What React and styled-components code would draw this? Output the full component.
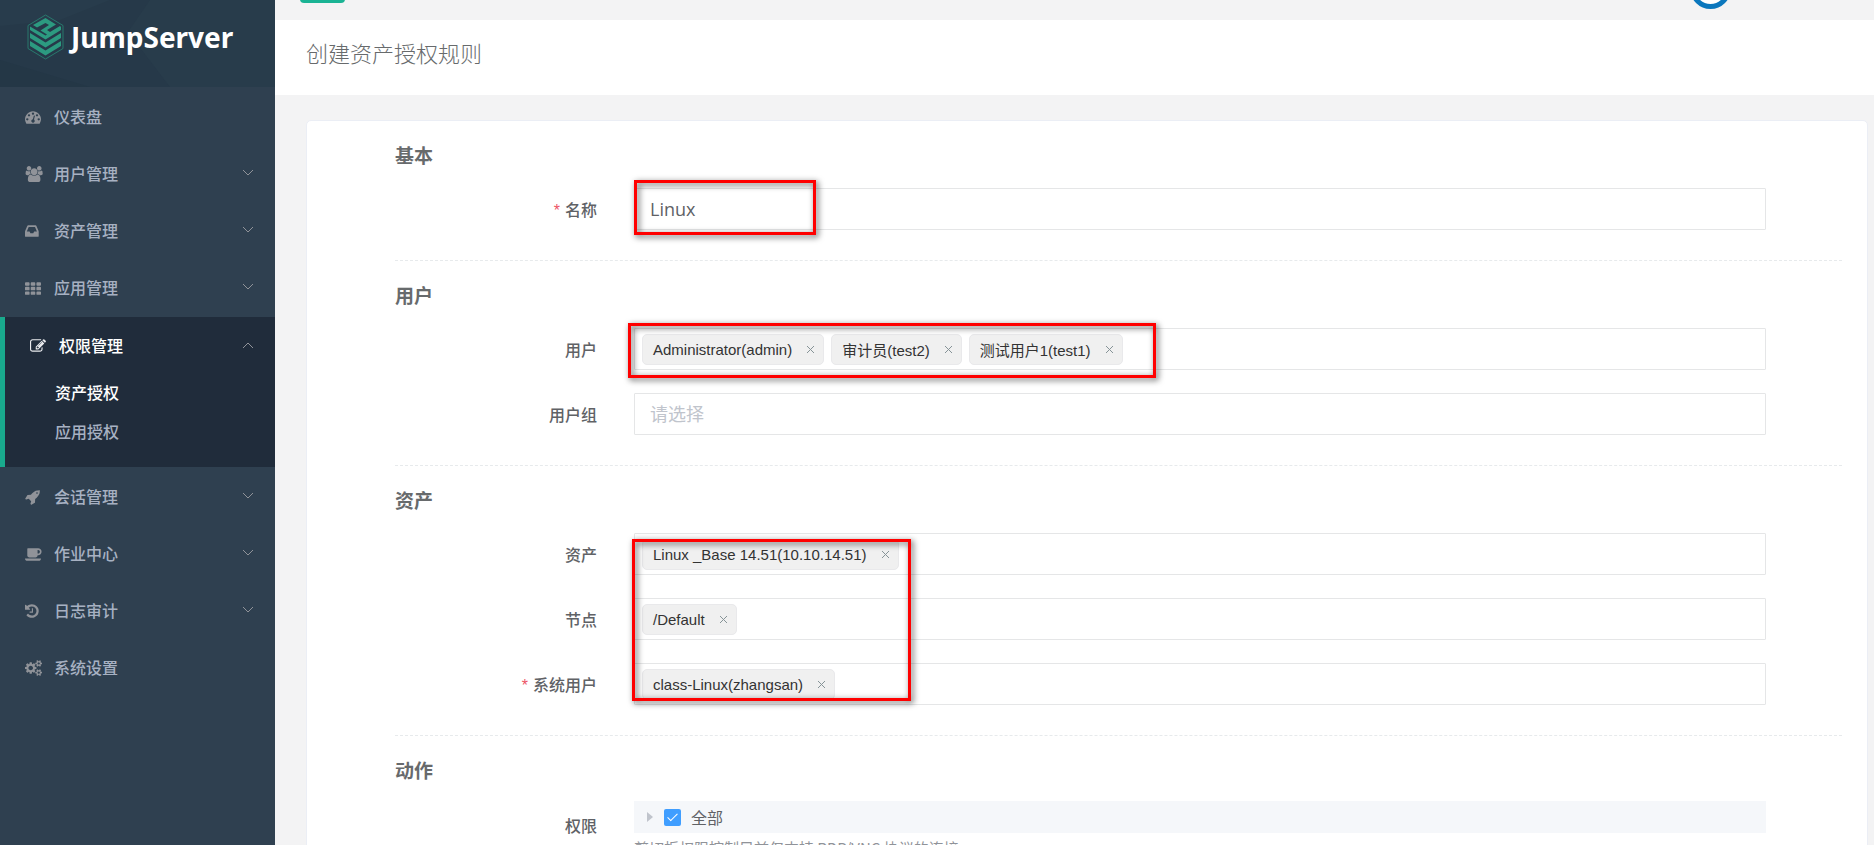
import React from "react";
import styled, { createGlobalStyle, css } from "styled-components";

const Global = createGlobalStyle`
  *, *::before, *::after { box-sizing: border-box; }
  body {
    margin: 0;
    overflow: hidden;
    background: #f3f3f4;
    color: #676a6c;
    font-family: "Open Sans", "Noto Sans CJK SC", sans-serif;
    font-size: 16px;
  }
  button, input { font: inherit; }
`;

const Layout = styled.div`
  display: grid;
  grid-template-columns: 275px minmax(0, 1fr);
  height: 100vh;
`;

const Sidebar = styled.aside`
  background: #2f4050;
  overflow: hidden;
`;

const Brand = styled.a`
  position: relative;
  display: flex;
  align-items: flex-start;
  gap: 7px;
  height: 87px;
  padding: 14px 0 0 27px;
  background: #263949;
  color: #fff;
  text-decoration: none;
`;

const BrandFacets = styled.svg`
  position: absolute;
  inset: 0;
  width: 100%;
  height: 100%;
`;

const BrandMark = styled.svg`
  position: relative;
  width: 37px;
  height: 46px;
`;

const BrandName = styled.span`
  position: relative;
  font-family: "Noto Sans", sans-serif;
  font-weight: 700;
  font-size: 28px;
  line-height: 46px;
`;

const MenuGroup = styled.ul`
  margin: 0;
  padding: 1px 0;
  list-style: none;
`;

const ActiveGroup = styled.div`
  padding-bottom: 15px;
  border-left: 5px solid #19aa8d;
  background: #202c3b;
`;

const MenuButton = styled.button`
  display: flex;
  align-items: center;
  width: 100%;
  height: 57px;
  padding: 0 21px 2px 25px;
  border: 0;
  background: none;
  color: ${(p) => (p.$active ? "#fff" : "#a7b1c2")};
  font-weight: 500;
  text-align: left;
`;

const MenuIcon = styled.svg`
  height: 16px;
  fill: ${(p) => (p.$active ? "#e9ebee" : "#909399")};
`;

const IconSlot = styled.span`
  display: flex;
  width: 29px;
  padding-top: 3px;
`;

const MenuText = styled.span`
  flex: 1;
`;

const Chevron = styled.svg`
  width: 12px;
  height: 8px;
  fill: none;
  stroke: #909399;
  ${(p) => p.$open && css`transform: rotate(180deg);`}
`;

const SubMenu = styled.ul`
  margin: 0;
  padding: 0;
  list-style: none;
`;

const SubLink = styled.a`
  display: block;
  padding-left: 50px;
  line-height: 39px;
  color: ${(p) => (p.$active ? "#fff" : "#a7b1c2")};
  font-weight: 500;
  text-decoration: none;
`;

const Main = styled.main`
  min-width: 0;
  overflow: hidden;
`;

const TopBar = styled.header`
  display: flex;
  align-items: flex-end;
  justify-content: space-between;
  height: 20px;
  padding: 0 143px 0 25px;
  overflow: hidden;
`;

const ToggleButton = styled.button`
  flex: none;
  width: 45px;
  height: 36px;
  margin-bottom: 17px;
  border: 0;
  border-radius: 4px;
  background: #1ab394;
`;

const Avatar = styled.span`
  flex: none;
  width: 41px;
  height: 41px;
  margin-bottom: 11px;
  border: 5px solid #0b77bd;
  border-radius: 50%;
  background: #fff;
`;

const PageTitle = styled.h1`
  margin: 0;
  padding-left: 31px;
  background: #fff;
  color: #676a6c;
  font-weight: 300;
  font-size: 22px;
  line-height: 66px;
  height: 75px;
`;

const Content = styled.div`
  padding: 25px 6px 0 31px;
`;

const Card = styled.form`
  padding: 0 25px 40px 88px;
  border: 1px solid #ebeef5;
  border-radius: 5px;
  background: #fff;
`;

const Section = styled.section`
  padding: 20px 0 30px;
  & + & { border-top: 1px dashed #e7eaec; }
`;

const SectionTitle = styled.h3`
  margin: 0 0 ${(p) => (p.$tight ? 15 : 17)}px;
  font-size: 19px;
  font-weight: 700;
  line-height: 30px;
`;

const Fields = styled.div`
  display: grid;
  gap: 23px;
  padding-right: 76px;
`;

const Field = styled.div`
  display: grid;
  grid-template-columns: 202px minmax(0, 1fr);
  column-gap: 37px;
`;

const Label = styled.label`
  line-height: 44px;
  height: ${(p) => (p.$tall ? 50 : 42)}px;
  padding-top: ${(p) => (p.$tall ? 3 : 0)}px;
  color: #606266;
  font-weight: 500;
  text-align: right;
  ${(p) => p.$required && css`
    &::before {
      content: "*";
      margin-right: 5px;
      color: #ed5565;
      font-family: "Liberation Sans", sans-serif;
      font-weight: 400;
    }
  `}
`;

const Control = styled.div`
  position: relative;
`;

const TextInput = styled.input`
  display: block;
  width: 100%;
  height: 42px;
  padding: 0 15px;
  border: 1px solid #e5e6e7;
  border-radius: 1px;
  background: #fff;
  color: #606266;
  font-size: 18px;
  &::placeholder { color: #c0c4cc; opacity: 1; }
`;

const TagBox = styled.div`
  display: flex;
  align-items: center;
  gap: 7px;
  height: 42px;
  padding: 0 7px;
  border: 1px solid #e5e6e7;
  border-radius: 1px;
`;

const TagSearch = styled.input`
  flex: 1;
  min-width: 0;
  height: 30px;
  border: 0;
  outline: 0;
`;

const Tag = styled.span`
  display: flex;
  align-items: center;
  height: 31px;
  padding: 0 7px 0 10px;
  border: 1px solid #e9e9eb;
  border-radius: 5px;
  background: #f0f0f0;
  color: #333;
  font-family: "Liberation Sans", "Noto Sans CJK SC", sans-serif;
  font-size: 15px;
  white-space: nowrap;
`;

const TagClose = styled.button`
  display: flex;
  margin-left: 13px;
  padding: 1px;
  border: 0;
  background: none;
  svg { width: 9px; height: 9px; stroke: #869397; }
`;

const Marker = styled.span`
  position: absolute;
  z-index: 1;
  top: ${(p) => p.$top}px;
  left: ${(p) => p.$left}px;
  width: ${(p) => p.$width}px;
  height: ${(p) => p.$height}px;
  border: 3px solid #f00;
  filter: drop-shadow(2px 2px 3px rgba(0, 0, 0, 0.7));
  pointer-events: none;
`;

const TreeRow = styled.div`
  display: flex;
  align-items: center;
  height: 32px;
  padding-left: 13px;
  background: #f5f7fa;
`;

const TreeCaret = styled.svg`
  width: 6px;
  height: 10px;
  margin-right: 11px;
  fill: #c0c4cc;
`;

const CheckLabel = styled.label`
  display: flex;
  align-items: center;
  gap: 10px;
  color: #606266;
`;

const CheckBox = styled.input`
  appearance: none;
  display: grid;
  place-items: center;
  width: 17px;
  height: 17px;
  margin: 0;
  border-radius: 2px;
  background: #409eff;
  &::after {
    content: "";
    width: 5px;
    height: 10px;
    margin-top: -2px;
    border: solid #fff;
    border-width: 0 1px 1px 0;
    transform: rotate(45deg);
  }
`;

const Help = styled.p`
  margin: 5px 0 0;
  color: #909399;
  font-family: "Noto Sans CJK SC", sans-serif;
  font-size: 15px;
  line-height: 20px;
`;

const ICONS = {
  dashboard: [1792, "M384 1152q0-53-37.5-90.5t-90.5-37.5-90.5 37.5-37.5 90.5 37.5 90.5 90.5 37.5 90.5-37.5 37.5-90.5zm192-448q0-53-37.5-90.5t-90.5-37.5-90.5 37.5-37.5 90.5 37.5 90.5 90.5 37.5 90.5-37.5 37.5-90.5zm428 481l101-382q6-26-7.5-48.5t-38.5-29.5-48 6.5-30 39.5l-101 382q-60 5-107 43.5t-63 98.5q-20 77 20 146t117 89 146-20 89-117q16-60-6-117t-72-91zm660-33q0-53-37.5-90.5t-90.5-37.5-90.5 37.5-37.5 90.5 37.5 90.5 90.5 37.5 90.5-37.5 37.5-90.5zm-640-640q0-53-37.5-90.5t-90.5-37.5-90.5 37.5-37.5 90.5 37.5 90.5 90.5 37.5 90.5-37.5 37.5-90.5zm448 192q0-53-37.5-90.5t-90.5-37.5-90.5 37.5-37.5 90.5 37.5 90.5 90.5 37.5 90.5-37.5 37.5-90.5zm320 448q0 261-141 483-19 29-54 29h-1402q-35 0-54-29-141-221-141-483 0-182 71-348t191-286 286-191 348-71 348 71 286 191 191 286 71 348z"],
  users: [2048, "M657 896q-162 5-265 128h-134q-82 0-138-40.5t-56-118.5q0-353 124-353 6 0 43.5 21t97.5 42.5 119 21.5q67 0 133-23-5 37-5 66 0 139 81 256zm1071 637q0 120-73 189.5t-194 69.5h-874q-121 0-194-69.5t-73-189.5q0-53 3.5-103.5t14-109 26.5-108.5 43-97.5 62-81 85.5-53.5 111.5-20q10 0 43 21.5t73 48 107 48 135 21.5 135-21.5 107-48 73-48 43-21.5q61 0 111.5 20t85.5 53.5 62 81 43 97.5 26.5 108.5 14 109 3.5 103.5zm-1024-1277q0 106-75 181t-181 75-181-75-75-181 75-181 181-75 181 75 75 181zm704 384q0 159-112.5 271.5t-271.5 112.5-271.5-112.5-112.5-271.5 112.5-271.5 271.5-112.5 271.5 112.5 112.5 271.5zm576 225q0 78-56 118.5t-138 40.5h-134q-103-123-265-128 81-117 81-256 0-29-5-66 66 23 133 23 59 0 119-21.5t97.5-42.5 43.5-21q124 0 124 353zm-128-609q0 106-75 181t-181 75-181-75-75-181 75-181 181-75 181 75 75 181z"],
  inbox: [1664, "M1023 960h316q-1-3-2.5-8.5t-2.5-7.5l-212-496h-708l-212 496q-1 3-2.5 8t-2.5 8h316l95 192h320zm513 30v482q0 26-19 45t-45 19h-1408q-26 0-45-19t-19-45v-482q0-62 25-123l238-552q10-25 36.5-42t52.5-17h832q26 0 52.5 17t36.5 42l238 552q25 61 25 123z"],
  grid: [1792, "M96 256h320q96 0 96 96v192q0 96-96 96h-320q-96 0-96-96v-192q0-96 96-96zM736 256h320q96 0 96 96v192q0 96-96 96h-320q-96 0-96-96v-192q0-96 96-96zM1376 256h320q96 0 96 96v192q0 96-96 96h-320q-96 0-96-96v-192q0-96 96-96zM96 768h320q96 0 96 96v192q0 96-96 96h-320q-96 0-96-96v-192q0-96 96-96zM736 768h320q96 0 96 96v192q0 96-96 96h-320q-96 0-96-96v-192q0-96 96-96zM1376 768h320q96 0 96 96v192q0 96-96 96h-320q-96 0-96-96v-192q0-96 96-96zM96 1280h320q96 0 96 96v192q0 96-96 96h-320q-96 0-96-96v-192q0-96 96-96zM736 1280h320q96 0 96 96v192q0 96-96 96h-320q-96 0-96-96v-192q0-96 96-96zM1376 1280h320q96 0 96 96v192q0 96-96 96h-320q-96 0-96-96v-192q0-96 96-96z"],
  edit: [1792, "M888 1184l116-116-152-152-116 116v56h96v96h56zm440-720q-16-16-33 1l-350 350q-17 17-1 33t33-1l350-350q17-17 1-33zm80 594v190q0 119-84.5 203.5t-203.5 84.5h-832q-119 0-203.5-84.5t-84.5-203.5v-832q0-119 84.5-203.5t203.5-84.5h832q63 0 117 25 15 7 18 23 3 17-9 29l-49 49q-14 14-32 8-23-6-45-6h-832q-66 0-113 47t-47 113v832q0 66 47 113t113 47h832q66 0 113-47t47-113v-126q0-13 9-22l64-64q15-15 35-7t20 29zm-96-738l288 288-672 672h-288v-288zm444 132l-92 92-288-288 92-92q28-28 68-28t68 28l152 152q28 28 28 68t-28 68z"],
  rocket: [1792, "M1440 448q0-40-28-68t-68-28-68 28-28 68 28 68 68 28 68-28 28-68zm224-288q0 249-75.5 430.5t-253.5 360.5q-81 80-195 176l-20 379q-2 16-16 26l-384 224q-7 4-16 4-12 0-23-9l-64-64q-13-14-8-32l85-276-281-281-276 85q-3 1-9 1-14 0-23-9l-64-64q-17-19-5-39l224-384q10-14 26-16l379-20q96-114 176-195 188-187 358-258t431-71q14 0 24 9.5t10 22.5z"],
  coffee: [1920, "M1664 640q0-80-56-136t-136-56h-64v384h64q80 0 136-56t56-136zm-1664 768h1792q0 106-75 181t-181 75h-1280q-106 0-181-75t-75-181zm1856-768q0 159-112.5 271.5t-271.5 112.5h-64v32q0 92-66 158t-158 66h-704q-92 0-158-66t-66-158v-736q0-26 19-45t45-19h1152q159 0 271.5 112.5t112.5 271.5z"],
  history: [1664, "M1536 896q0 156-61 298t-164 245-245 164-298 61q-172 0-327-72.5t-264-204.5q-7-10-6.5-22.5t8.5-20.5l137-138q10-9 25-9 16 2 23 12 73 95 179 147t225 52q104 0 198.5-40.5t163.5-109.5 109.5-163.5 40.5-198.5-40.5-198.5-109.5-163.5-163.5-109.5-198.5-40.5q-98 0-188 35.5t-160 101.5l137 138q31 30 14 69-17 40-59 40h-448q-26 0-45-19t-19-45v-448q0-42 40-59 39-17 69 14l130 129q107-101 244.5-156.5t284.5-55.5q156 0 298 61t245 164 164 245 61 298zm-640-288v448q0 14-9 23t-23 9h-320q-14 0-23-9t-9-23v-64q0-14 9-23t23-9h224v-352q0-14 9-23t23-9h64q14 0 23 9t9 23z"],
  cogs: [1920, "M896 896q0-106-75-181t-181-75-181 75-75 181 75 181 181 75 181-75 75-181zm768 512q0-52-38-90t-90-38-90 38-38 90q0 53 37.5 90.5t90.5 37.5 90.5-37.5 37.5-90.5zm0-1024q0-52-38-90t-90-38-90 38-38 90q0 53 37.5 90.5t90.5 37.5 90.5-37.5 37.5-90.5zm-384 421v185q0 10-7 19.5t-16 10.5l-155 24q-11 35-32 76 34 48 90 115 7 10 7 20 0 12-7 19-23 30-82.5 89.5t-78.5 59.5q-11 0-21-7l-115-90q-37 19-77 31-11 108-23 155-7 24-30 24h-186q-11 0-20-7.5t-10-17.5l-23-153q-34-10-75-31l-118 89q-7 7-20 7-11 0-21-8-144-133-144-160 0-9 7-19 10-14 41-53t47-61q-23-44-35-82l-152-24q-10-1-17-9.5t-7-19.5v-185q0-10 7-19.5t16-10.5l155-24q11-35 32-76-34-48-90-115-7-11-7-20 0-12 7-20 22-30 82-89t79-59q11 0 21 7l115 90q34-18 77-32 11-108 23-154 7-24 30-24h186q11 0 20 7.5t10 17.5l23 153q34 10 75 31l118-89q8-7 20-7 11 0 21 8 144 133 144 160 0 9-7 19-12 16-42 54t-45 60q23 48 34 82l152 23q10 2 17 10.5t7 19.5zm640 533v140q0 16-149 31-12 27-30 52 51 113 51 138 0 4-4 7-122 71-124 71-8 0-46-47t-52-68q-20 2-30 2t-30-2q-14 21-52 68t-46 47q-2 0-124-71-4-3-4-7 0-25 51-138-18-25-30-52-149-15-149-31v-140q0-16 149-31 13-29 30-52-51-113-51-138 0-4 4-7 4-2 35-20t59-34 30-16q8 0 46 46.5t52 67.5q20-2 30-2t30 2q51-71 92-112l6-2q4 0 124 70 4 3 4 7 0 25-51 138 17 23 30 52 149 15 149 31zm0-1024v140q0 16-149 31-12 27-30 52 51 113 51 138 0 4-4 7-122 71-124 71-8 0-46-47t-52-68q-20 2-30 2t-30-2q-14 21-52 68t-46 47q-2 0-124-71-4-3-4-7 0-25 51-138-18-25-30-52-149-15-149-31v-140q0-16 149-31 13-29 30-52-51-113-51-138 0-4 4-7 4-2 35-20t59-34 30-16q8 0 46 46.5t52 67.5q20-2 30-2t30 2q51-71 92-112l6-2q4 0 124 70 4 3 4 7 0 25-51 138 17 23 30 52 149 15 149 31z"],
};

function MenuEntry({ icon, text, expandable, active }) {
  const [width, path] = ICONS[icon];
  return (
    <MenuButton type="button" $active={active} aria-expanded={expandable ? !!active : undefined}>
      <IconSlot>
        <MenuIcon $active={active} viewBox={`0 0 ${width} 1792`} aria-hidden="true">
          <path d={path} />
        </MenuIcon>
      </IconSlot>
      <MenuText>{text}</MenuText>
      {expandable && (
        <Chevron $open={active} viewBox="0 0 12 8" aria-hidden="true">
          <path d="M1 1l5 5 5-5" />
        </Chevron>
      )}
    </MenuButton>
  );
}

function TagField({ id, tags }) {
  return (
    <TagBox>
      {tags.map((tag) => (
        <Tag key={tag}>
          {tag}
          <TagClose type="button" aria-label={`移除 ${tag}`}>
            <svg viewBox="0 0 9 9" aria-hidden="true"><path d="M1 1l7 7M8 1l-7 7" /></svg>
          </TagClose>
        </Tag>
      ))}
      <TagSearch id={id} />
    </TagBox>
  );
}

function FormField({ id, label, required, tall, children }) {
  return (
    <Field>
      <Label htmlFor={id} $required={required} $tall={tall}>{label}</Label>
      <Control>{children}</Control>
    </Field>
  );
}

const MENU_TOP = [
  { icon: "dashboard", text: "仪表盘" },
  { icon: "users", text: "用户管理", expandable: true },
  { icon: "inbox", text: "资产管理", expandable: true },
  { icon: "grid", text: "应用管理", expandable: true },
];

const MENU_BOTTOM = [
  { icon: "rocket", text: "会话管理", expandable: true },
  { icon: "coffee", text: "作业中心", expandable: true },
  { icon: "history", text: "日志审计", expandable: true },
  { icon: "cogs", text: "系统设置" },
];

export default function App() {
  return (
    <Layout>
      <Global />
      <Sidebar>
        <Brand href="#">
          <BrandFacets viewBox="0 0 275 87" preserveAspectRatio="none" aria-hidden="true">
            <path d="M0 26L60 20 110 0H0z" fill="#283c4c" />
            <path d="M150 0L128 32 170 87H275V0z" fill="#283c4b" />
            <path d="M0 60L90 87H0z" fill="#243746" />
          </BrandFacets>
          <BrandMark viewBox="0 0 37 46" aria-hidden="true">
            <path d="M18.5 1L36 11.5V34.5L18.5 45 1 34.5V11.5z" fill="none" stroke="#28796d" />
            <path d="M6 11L18.5 4 29 10.500 20 16 23 18 33 12 34 13V16L18.500 25.500 3 16V12.500L18.500 21.500 20 20.500 13.500 16.500 22 11 18.500 9 10 13.500z" fill="#2c9a80" />
            <path d="M3 19L18.5 28.5 34 19V24L18.5 33.5 3 24zM3 27L18.5 36.5 34 27V32L18.5 41.500 3 32z" fill="#2c9a80" />
          </BrandMark>
          <BrandName>JumpServer</BrandName>
        </Brand>
        <nav>
          <MenuGroup>
            {MENU_TOP.map((m) => <li key={m.text}><MenuEntry {...m} /></li>)}
          </MenuGroup>
          <ActiveGroup>
            <MenuEntry icon="edit" text="权限管理" expandable active />
            <SubMenu>
              <li><SubLink href="#" $active>资产授权</SubLink></li>
              <li><SubLink href="#">应用授权</SubLink></li>
            </SubMenu>
          </ActiveGroup>
          <MenuGroup>
            {MENU_BOTTOM.map((m) => <li key={m.text}><MenuEntry {...m} /></li>)}
          </MenuGroup>
        </nav>
      </Sidebar>
      <Main>
        <TopBar>
          <ToggleButton type="button" aria-label="折叠菜单" />
          <Avatar />
        </TopBar>
        <PageTitle>创建资产授权规则</PageTitle>
        <Content>
          <Card>
            <Section>
              <SectionTitle>基本</SectionTitle>
              <Fields>
                <FormField id="name" label="名称" required>
                  <TextInput id="name" defaultValue="Linux" />
                  <Marker $top={-8} $left={0} $width={182} $height={55} />
                </FormField>
              </Fields>
            </Section>
            <Section>
              <SectionTitle>用户</SectionTitle>
              <Fields>
                <FormField id="users" label="用户">
                  <TagField id="users" tags={["Administrator(admin)", "审计员(test2)", "测试用户1(test1)"]} />
                  <Marker $top={-5} $left={-6} $width={528} $height={55} />
                </FormField>
                <FormField id="groups" label="用户组">
                  <TextInput id="groups" placeholder="请选择" />
                </FormField>
              </Fields>
            </Section>
            <Section>
              <SectionTitle>资产</SectionTitle>
              <Fields>
                <FormField id="assets" label="资产">
                  <TagField id="assets" tags={["Linux _Base 14.51(10.10.14.51)"]} />
                  <Marker $top={6} $left={-2} $width={279} $height={162} />
                </FormField>
                <FormField id="nodes" label="节点">
                  <TagField id="nodes" tags={["/Default"]} />
                </FormField>
                <FormField id="sysusers" label="系统用户" required>
                  <TagField id="sysusers" tags={["class-Linux(zhangsan)"]} />
                </FormField>
              </Fields>
            </Section>
            <Section>
              <SectionTitle $tight>动作</SectionTitle>
              <Fields>
                <FormField id="all" label="权限" tall>
                  <TreeRow>
                    <TreeCaret viewBox="0 0 6 10" aria-hidden="true"><path d="M0 0l6 5-6 5z" /></TreeCaret>
                    <CheckLabel>
                      <CheckBox type="checkbox" id="all" defaultChecked />
                      全部
                    </CheckLabel>
                  </TreeRow>
                  <Help>剪切板权限控制目前仅支持 RDP/VNC 协议的连接</Help>
                </FormField>
              </Fields>
            </Section>
          </Card>
        </Content>
      </Main>
    </Layout>
  );
}
